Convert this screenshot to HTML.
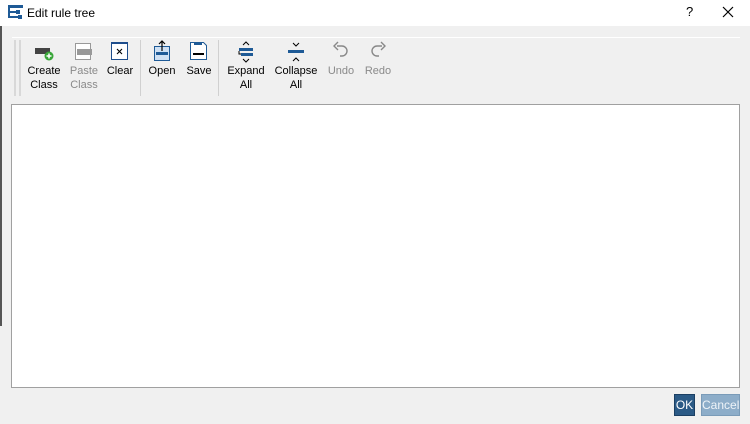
<!DOCTYPE html>
<html><head><style>
*{margin:0;padding:0;box-sizing:border-box}
body{width:750px;height:424px;background:#f0f0f0;font-family:"Liberation Sans",sans-serif;font-size:11px;color:#000;position:relative;overflow:hidden}
.a{position:absolute}
.lbl{position:absolute;text-align:center;line-height:14px;font-size:11px}
.dis{color:#8a8a8a}
</style></head><body>
<div class="a" style="left:0;top:0;width:750px;height:26px;background:#fff"></div>
<svg class="a" style="left:7px;top:4px" width="18" height="16" viewBox="0 0 18 16">
<rect x="1" y="1" width="15" height="3" fill="#1e5a96"/><rect x="1" y="1" width="2" height="13" fill="#1e5a96"/>
<rect x="3" y="7" width="6" height="2" fill="#1e5a96"/><rect x="9" y="6" width="4" height="4" fill="#1e5a96"/>
<rect x="3" y="12" width="8" height="2" fill="#1e5a96"/><rect x="11" y="11" width="4" height="4" fill="#1e5a96"/>
</svg>
<div class="a" style="left:27px;top:6px;font-size:12px">Edit rule tree</div>
<div class="a" style="left:686px;top:4px;font-size:13px">?</div>
<svg class="a" style="left:722px;top:6px" width="12" height="12"><path d="M1 1L11 11M11 1L1 11" stroke="#000" stroke-width="1.2"/></svg>
<div class="a" style="left:0;top:26px;width:2px;height:300px;background:#555"></div>
<div class="a" style="left:12px;top:37px;width:728px;height:1px;background:#fff"></div>
<div class="a" style="left:14px;top:40px;width:2px;height:56px;background:#d8d8d8"></div>
<div class="a" style="left:19px;top:40px;width:2px;height:56px;background:#d8d8d8"></div>
<div class="a" style="left:140px;top:40px;width:1px;height:56px;background:#d0d0d0"></div>
<div class="a" style="left:218px;top:40px;width:1px;height:56px;background:#d0d0d0"></div>
<!-- icons -->
<svg class="a" style="left:34px;top:41px" width="22" height="22"><rect x="1" y="7" width="15" height="6" fill="#444"/><circle cx="15" cy="15" r="4.5" fill="#3aa63a"/><path d="M15 12.5v5M12.5 15h5" stroke="#fff" stroke-width="1.5"/></svg>
<svg class="a" style="left:73px;top:41px" width="22" height="22"><rect x="2.5" y="2.5" width="15" height="16" fill="#fff" stroke="#999"/><rect x="4" y="8" width="15" height="6" fill="#999"/></svg>
<svg class="a" style="left:110px;top:41px" width="20" height="20"><rect x="1.5" y="1.5" width="16" height="17" fill="#fff" stroke="#1e4d8c"/><rect x="1" y="1" width="17" height="2" fill="#1e4d8c"/><path d="M7 8l5 5M12 8l-5 5" stroke="#000" stroke-width="1.1"/></svg>
<svg class="a" style="left:152px;top:40px" width="20" height="22"><rect x="2.5" y="6.5" width="15" height="14" fill="#cfe0f3" stroke="#1e5a96"/><rect x="4" y="12" width="12" height="3" fill="#1e5a96"/><path d="M10 1v10M7 4l3-3 3 3" stroke="#000" fill="none" stroke-width="1.2"/></svg>
<svg class="a" style="left:189px;top:41px" width="20" height="20"><path d="M1.5 1.5h13l3 3v14h-16z" fill="#fff" stroke="#1e5a96"/><rect x="4" y="12" width="11" height="2" fill="#000"/><rect x="5" y="1" width="8" height="3" fill="#1e5a96"/></svg>
<svg class="a" style="left:236px;top:41px" width="20" height="22"><path d="M7 4l3-3 3 3M7 18l3 3 3-3" stroke="#000" fill="none"/><rect x="3" y="7" width="14" height="3" fill="#1e5a96"/><rect x="5" y="12" width="12" height="3" fill="#1e5a96"/><path d="M3 10v3h2" stroke="#000" fill="none"/></svg>
<svg class="a" style="left:286px;top:41px" width="20" height="22"><path d="M7 2l3 3 3-3M7 20l3-3 3 3" stroke="#000" fill="none"/><rect x="2" y="9" width="16" height="3" fill="#1e5a96"/></svg>
<svg class="a" style="left:331px;top:41px" width="20" height="20"><path d="M6 5h5a5 5 0 0 1 0 10h-2" stroke="#888" stroke-width="1.4" fill="none"/><path d="M7 1l-4 4 4 4" stroke="#888" stroke-width="1.4" fill="none"/></svg>
<svg class="a" style="left:368px;top:41px" width="20" height="20"><path d="M14 5H9a5 5 0 0 0 0 10h2" stroke="#888" stroke-width="1.4" fill="none"/><path d="M13 1l4 4-4 4" stroke="#888" stroke-width="1.4" fill="none"/></svg>
<!-- labels -->
<div class="lbl" style="left:24px;top:64px;width:40px">Create<br>Class</div>
<div class="lbl dis" style="left:64px;top:64px;width:40px">Paste<br>Class</div>
<div class="lbl" style="left:103px;top:64px;width:34px">Clear</div>
<div class="lbl" style="left:145px;top:64px;width:34px">Open</div>
<div class="lbl" style="left:182px;top:64px;width:34px">Save</div>
<div class="lbl" style="left:224px;top:64px;width:44px">Expand<br>All</div>
<div class="lbl" style="left:272px;top:64px;width:48px">Collapse<br>All</div>
<div class="lbl dis" style="left:324px;top:64px;width:34px">Undo</div>
<div class="lbl dis" style="left:361px;top:64px;width:34px">Redo</div>
<div class="a" style="left:11px;top:104px;width:729px;height:284px;background:#fff;border:1px solid #a0a0a0"></div>
<div class="a" style="left:674px;top:394px;width:21px;height:22px;background:#2b5a86;border:1px solid #1b3f63;color:#fff;font-size:12px;text-align:center;line-height:20px">OK</div>
<div class="a" style="left:701px;top:394px;width:39px;height:22px;background:#8dadc9;border:1px solid #7a9bb8;color:#eef3f8;font-size:12px;text-align:center;line-height:20px">Cancel</div>
</body></html>
